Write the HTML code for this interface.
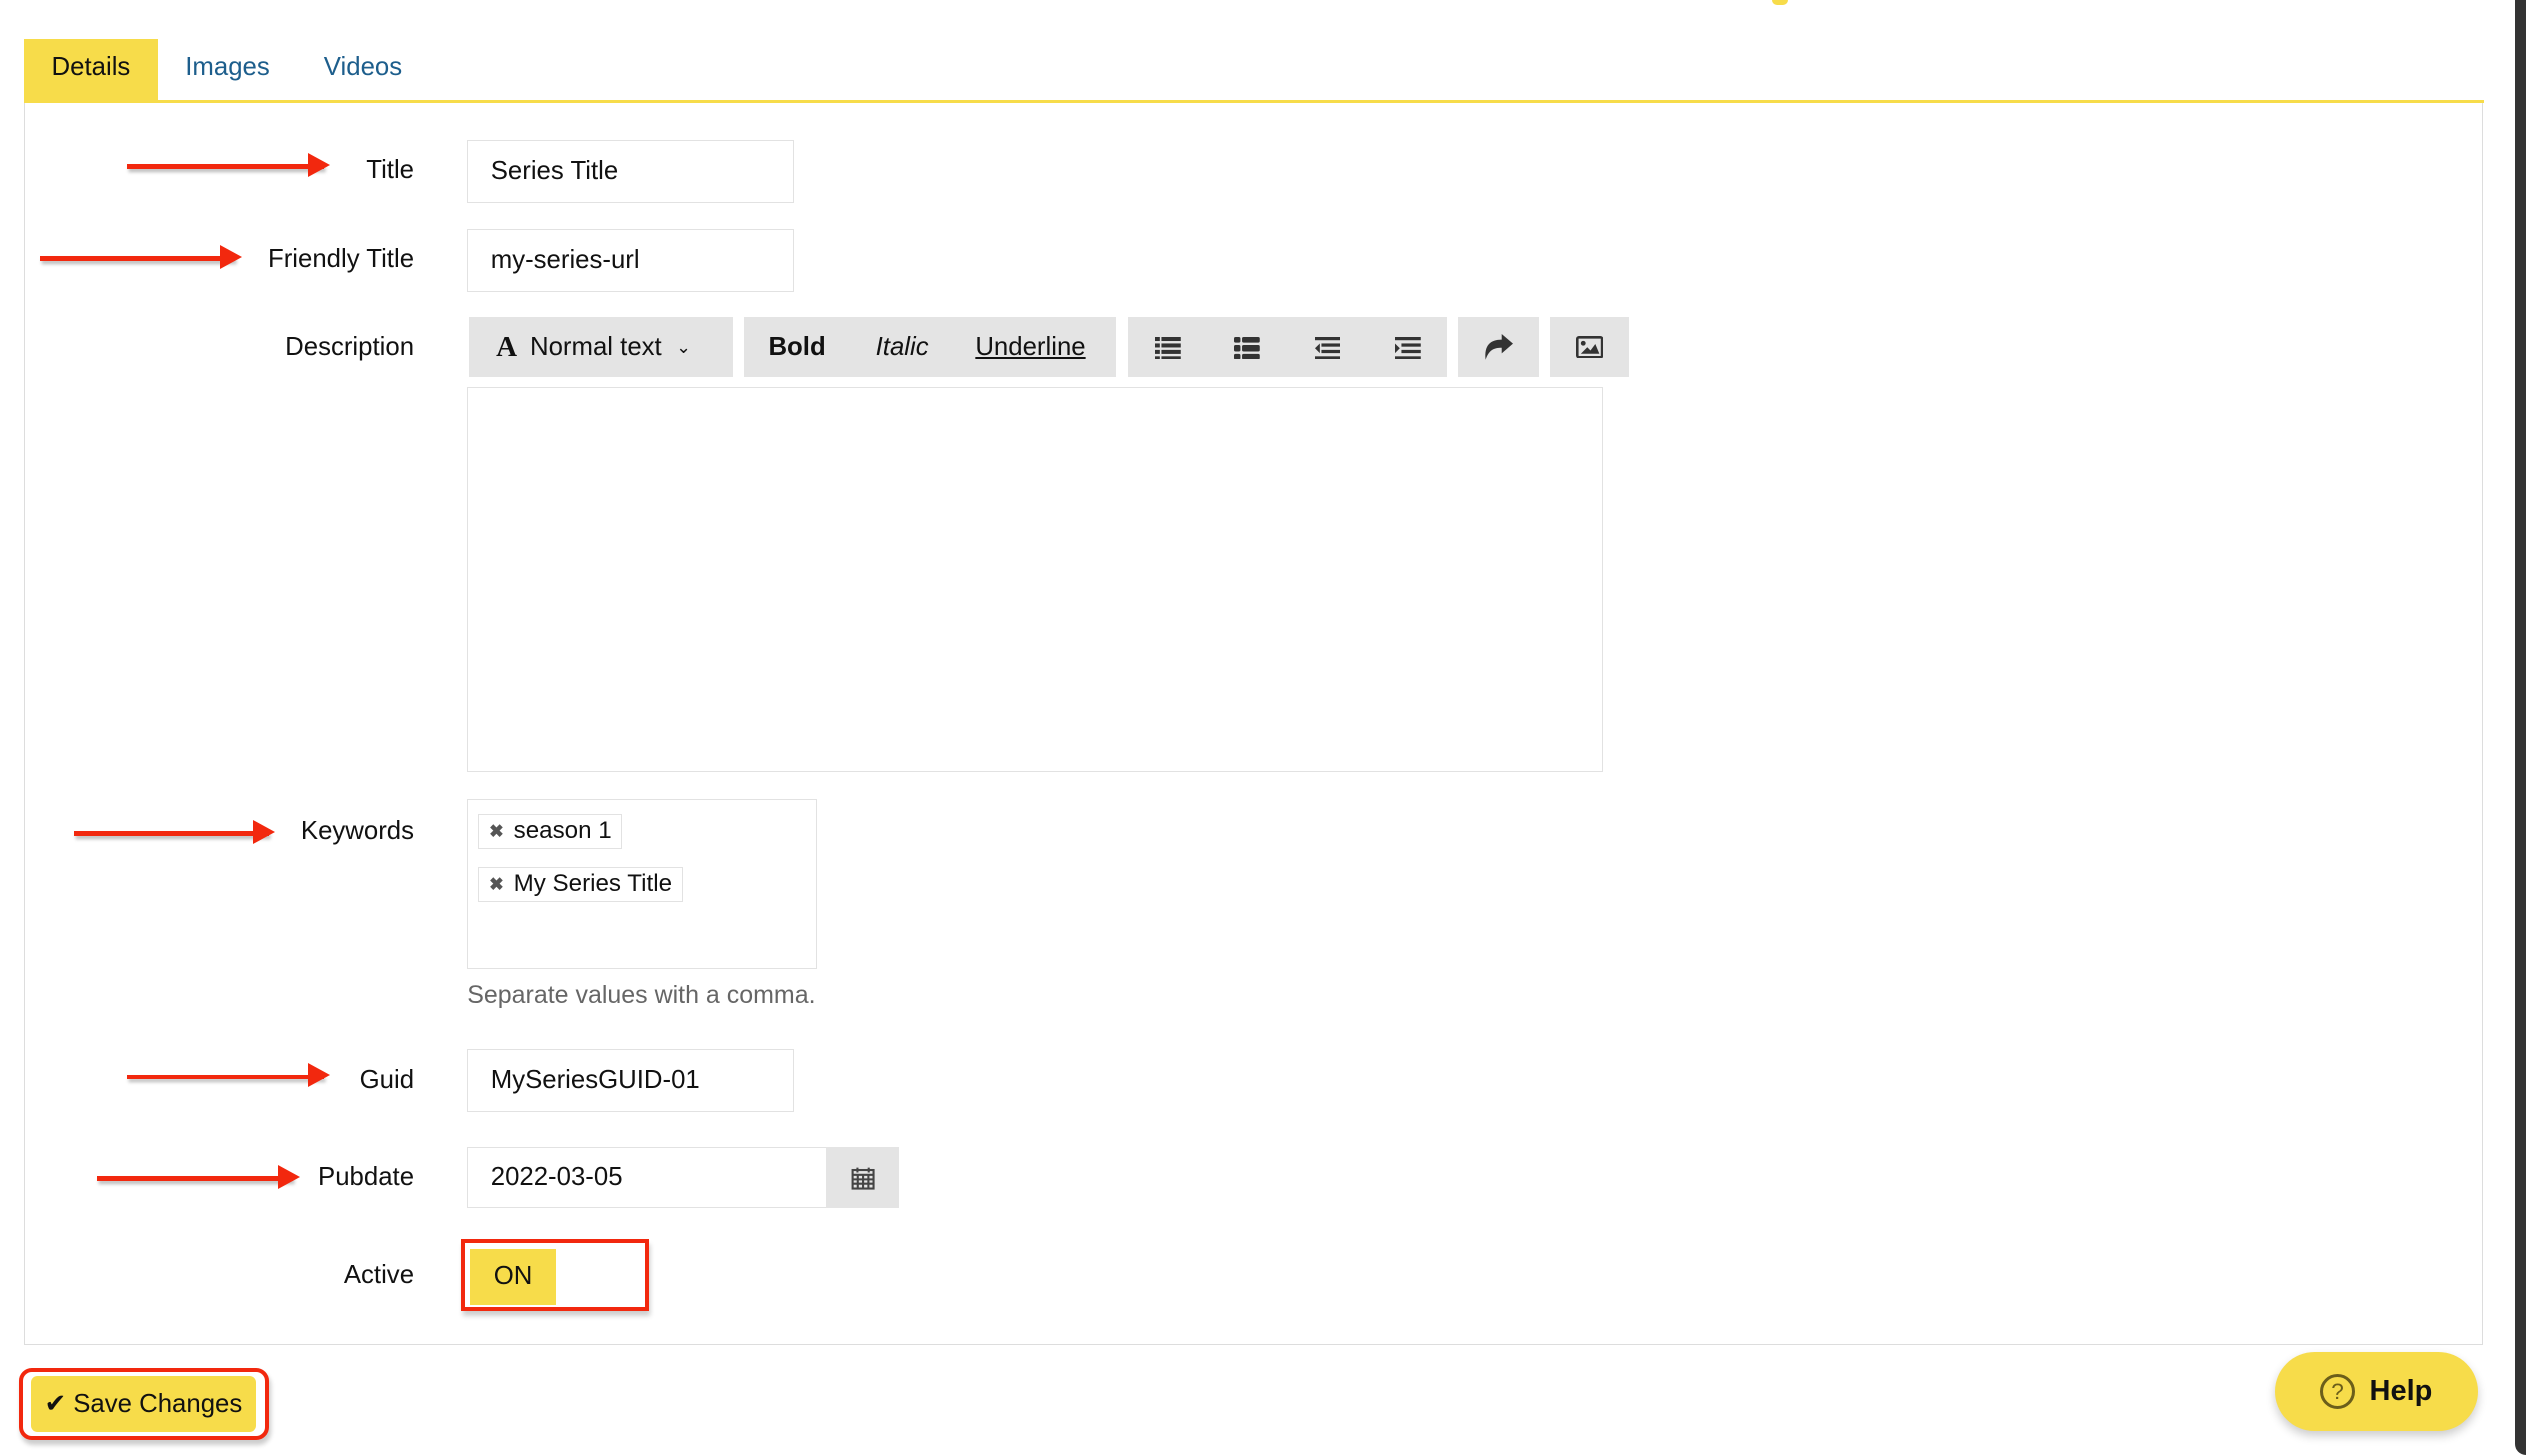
<!DOCTYPE html>
<html><head><meta charset="utf-8"><style>
html,body{margin:0;padding:0;background:#fff;overflow:hidden}
#w{zoom:1.611;width:1568px;height:903px;position:relative;font-family:"Liberation Sans",sans-serif;font-size:16px;color:#111}
.a{position:absolute}
.lab{position:absolute;right:1311px;text-align:right;white-space:nowrap}
.inp{position:absolute;border:1px solid #e2e2e2;box-sizing:border-box;padding-left:14px;display:flex;align-items:center;background:#fff}
.tb{position:absolute;background:#e4e4e4;top:197px;height:37px;display:flex;align-items:center}
.arr{position:absolute;height:3px;background:#f2280e;box-shadow:1px 2px 2px rgba(0,0,0,.25)}
.arr:after{content:"";position:absolute;right:-4px;top:-7px;border-left:14px solid #f2280e;border-top:8px solid transparent;border-bottom:8px solid transparent}
.tag{position:absolute;left:297px;border:1px solid #e2e2e2;height:22px;box-sizing:border-box;padding:0 6px;display:flex;align-items:center;font-size:15px}
.tag b{font-size:11px;color:#555;margin-right:6px}
</style></head><body><div id="w">
<div class="a" style="left:15px;top:24px;width:83px;height:39px;background:#f7dc4a"></div>
<div class="a" style="left:32px;top:33px">Details</div>
<div class="a" style="left:115px;top:33px;color:#1d5e8c">Images</div>
<div class="a" style="left:201px;top:33px;color:#1d5e8c">Videos</div>
<div class="a" style="left:15px;top:62px;width:1527px;height:2px;background:#f7dc4a"></div>
<div class="a" style="left:15px;top:64px;width:1525px;height:770px;border:1px solid #ddd;border-top:none"></div>
<div class="a" style="left:1561px;top:0;width:7px;height:903px;background:#333;border-radius:0 0 0 8px"></div>
<div class="a" style="left:1100px;top:0;width:10px;height:3px;background:#f7dc4a;border-radius:0 0 5px 5px"></div>

<div class="arr" style="left:79px;top:102px;width:122px"></div>
<div class="arr" style="left:25px;top:159px;width:121px"></div>
<div class="arr" style="left:46px;top:516px;width:121px"></div>
<div class="arr" style="left:79px;top:667px;width:122px"></div>
<div class="arr" style="left:60px;top:730px;width:122px"></div>

<div class="lab" style="top:97px">Title</div>
<div class="lab" style="top:152px">Friendly Title</div>
<div class="lab" style="top:207px">Description</div>
<div class="lab" style="top:507px">Keywords</div>
<div class="lab" style="top:662px">Guid</div>
<div class="lab" style="top:722px">Pubdate</div>
<div class="lab" style="top:783px">Active</div>

<div class="inp" style="left:290px;top:87px;width:203px;height:39px">Series Title</div>
<div class="inp" style="left:290px;top:142px;width:203px;height:39px">my-series-url</div>

<div class="tb" style="left:291px;width:164px"><span style="font-family:'Liberation Serif',serif;font-weight:bold;font-size:18px;margin-left:17px">A</span><span style="margin-left:8px">Normal text</span><span style="margin-left:9px;font-size:11px">&#8964;</span></div>
<div class="tb" style="left:462px;width:231px"><b style="margin-left:15px">Bold</b><i style="margin-left:31px">Italic</i><u style="margin-left:29px">Underline</u></div>
<div class="tb" style="left:700px;width:198px">
<svg style="position:absolute;left:17px;top:12px" width="16" height="14" viewBox="0 0 16 14" fill="#333"><rect x="0" y="0" width="3" height="2.5"/><rect x="4" y="0" width="12" height="2.5"/><rect x="0" y="4" width="3" height="2.5"/><rect x="4" y="4" width="12" height="2.5"/><rect x="0" y="8" width="3" height="2.5"/><rect x="4" y="8" width="12" height="2.5"/><rect x="0" y="12" width="3" height="2"/><rect x="4" y="12" width="12" height="2"/></svg>
<svg style="position:absolute;left:66px;top:12px" width="16" height="14" viewBox="0 0 16 14" fill="#333"><rect x="0" y="0" width="4" height="3.5" rx="1"/><rect x="5" y="0" width="11" height="3.5" rx="1"/><rect x="0" y="5" width="4" height="4" rx="1"/><rect x="5" y="5" width="11" height="4" rx="1"/><rect x="0" y="10.5" width="4" height="3.5" rx="1"/><rect x="5" y="10.5" width="11" height="3.5" rx="1"/></svg>
<svg style="position:absolute;left:116px;top:12px" width="16" height="14" viewBox="0 0 16 14" fill="#333"><rect x="0" y="0" width="16" height="2"/><rect x="4" y="4" width="12" height="2"/><rect x="4" y="8" width="12" height="2"/><rect x="0" y="12" width="16" height="2"/><path d="M0 7 L3 4 L3 10Z"/></svg>
<svg style="position:absolute;left:166px;top:12px" width="16" height="14" viewBox="0 0 16 14" fill="#333"><rect x="0" y="0" width="16" height="2"/><rect x="4" y="4" width="12" height="2"/><rect x="4" y="8" width="12" height="2"/><rect x="0" y="12" width="16" height="2"/><path d="M3 7 L0 4 L0 10Z"/></svg>
</div>
<div class="tb" style="left:905px;width:50px"><svg style="margin-left:16px" width="18" height="16" viewBox="0 0 18 16" fill="#333"><path d="M18 6 L11 0 V3.5 C4 3.5 0 7 1 16 C3 10 6 8.5 11 8.5 V12Z"/></svg></div>
<div class="tb" style="left:962px;width:49px"><svg style="margin-left:16px" width="17" height="14" viewBox="0 0 17 14"><rect x="0.8" y="0.8" width="15.4" height="12.4" rx="1" fill="none" stroke="#333" stroke-width="1.6"/><circle cx="4.5" cy="4.5" r="1.5" fill="#333"/><path d="M3 11 L7 7 L9 9 L12 5 L14.5 11Z" fill="#333"/></svg></div>

<div class="a" style="left:290px;top:240px;width:704px;height:238px;border:1px solid #e2e2e2"></div>

<div class="a" style="left:290px;top:496px;width:216px;height:104px;border:1px solid #e2e2e2"></div>
<div class="tag" style="top:505px"><b>✖</b>season 1</div>
<div class="tag" style="top:538px"><b>✖</b>My Series Title</div>
<div class="a" style="left:290px;top:609px;color:#666;font-size:15.5px">Separate values with a comma.</div>

<div class="inp" style="left:290px;top:651px;width:203px;height:39px">MySeriesGUID-01</div>
<div class="inp" style="left:290px;top:712px;width:224px;height:38px">2022-03-05</div>
<div class="a" style="left:513px;top:712px;width:45px;height:38px;background:#e4e4e4;display:flex;align-items:center;justify-content:center"><svg width="15" height="15" viewBox="0 0 15 15" fill="none" stroke="#444" stroke-width="1.3"><rect x="1" y="2.5" width="13" height="11.5"/><path d="M1 5.5H14M4 1V4M11 1V4M1 8.3H14M1 11H14M4.2 5.5V14M7.5 5.5V14M10.8 5.5V14"/></svg></div>

<div class="a" style="left:286px;top:769px;width:112px;height:40px;border:3px solid #f2280e;box-shadow:1px 3px 3px rgba(0,0,0,.2)"></div>
<div class="a" style="left:292px;top:775px;width:53px;height:35px;background:#f7dc4a;display:flex;align-items:center;justify-content:center">ON</div>

<div class="a" style="left:12px;top:849px;width:150px;height:40px;border:3px solid #f2280e;border-radius:8px;background:#fff;box-shadow:1px 3px 3px rgba(0,0,0,.2)"></div>
<div class="a" style="left:19px;top:854px;width:140px;height:35px;background:#f7dc4a;border-radius:4px;display:flex;align-items:center;justify-content:center;font-size:16px">✔&nbsp;Save Changes</div>

<div class="a" style="left:1412px;top:839px;width:126px;height:49px;background:#f7dc4a;border-radius:25px;box-shadow:0 3px 6px rgba(0,0,0,.2);display:flex;align-items:center;justify-content:center;font-weight:bold;font-size:18px"><span style="display:inline-block;width:18px;height:18px;border:2px solid #6b5e1a;border-radius:50%;font-size:14px;line-height:18px;text-align:center;color:#6b5e1a;font-weight:normal;margin-right:9px">?</span>Help</div>
</div></body></html>
